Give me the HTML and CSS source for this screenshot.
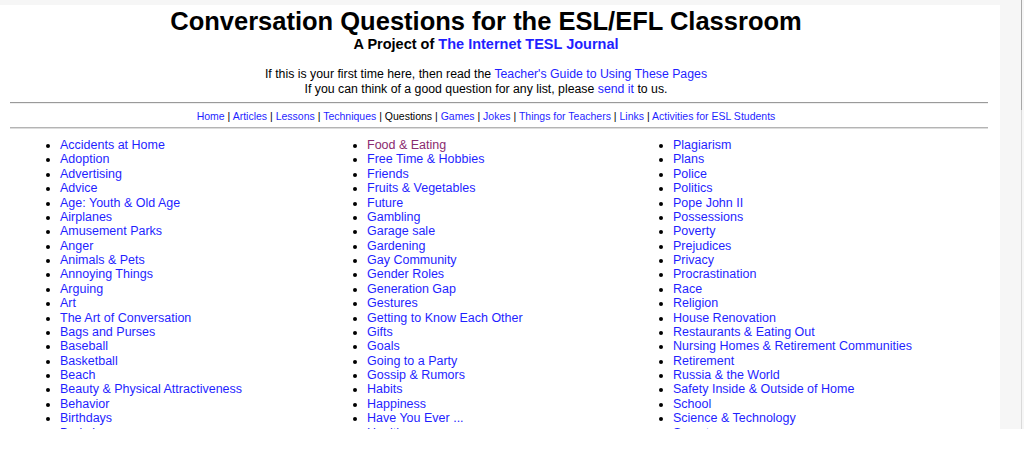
FILE: index.html
```html
<!DOCTYPE html>
<html>
<head>
<meta charset="utf-8">
<title>Conversation Questions for the ESL/EFL Classroom</title>
<link rel="stylesheet" href="styles.css">
</head>
<body>
<div class="frame">
  <div class="page">
    <div class="header">
      <h1 class="title">Conversation Questions for the ESL/EFL Classroom</h1>
      <div class="subtitle">A Project of <a href="#">The Internet TESL Journal</a></div>
      <p class="intro">If this is your first time here, then read the <a href="#">Teacher's Guide to Using These Pages</a><br>If you can think of a good question for any list, please <a href="#">send it</a> to us.</p>
    </div>
    <hr class="rule rule-top">
    <div class="nav">
      <a href="#">Home</a> | <a href="#">Articles</a> | <a href="#">Lessons</a> | <a href="#">Techniques</a> | Questions | <a href="#">Games</a> | <a href="#">Jokes</a> | <a href="#">Things for Teachers</a> | <a href="#">Links</a> | <a href="#">Activities for ESL Students</a>
    </div>
    <hr class="rule rule-bottom">
    <div class="columns">
      <ul class="topics">
        <li><a href="#">Accidents at Home</a></li>
        <li><a href="#">Adoption</a></li>
        <li><a href="#">Advertising</a></li>
        <li><a href="#">Advice</a></li>
        <li><a href="#">Age: Youth &amp; Old Age</a></li>
        <li><a href="#">Airplanes</a></li>
        <li><a href="#">Amusement Parks</a></li>
        <li><a href="#">Anger</a></li>
        <li><a href="#">Animals &amp; Pets</a></li>
        <li><a href="#">Annoying Things</a></li>
        <li><a href="#">Arguing</a></li>
        <li><a href="#">Art</a></li>
        <li><a href="#">The Art of Conversation</a></li>
        <li><a href="#">Bags and Purses</a></li>
        <li><a href="#">Baseball</a></li>
        <li><a href="#">Basketball</a></li>
        <li><a href="#">Beach</a></li>
        <li><a href="#">Beauty &amp; Physical Attractiveness</a></li>
        <li><a href="#">Behavior</a></li>
        <li><a href="#">Birthdays</a></li>
        <li><a href="#">Body Language</a></li>
      </ul>
      <ul class="topics">
        <li><a href="#" class="visited">Food &amp; Eating</a></li>
        <li><a href="#">Free Time &amp; Hobbies</a></li>
        <li><a href="#">Friends</a></li>
        <li><a href="#">Fruits &amp; Vegetables</a></li>
        <li><a href="#">Future</a></li>
        <li><a href="#">Gambling</a></li>
        <li><a href="#">Garage sale</a></li>
        <li><a href="#">Gardening</a></li>
        <li><a href="#">Gay Community</a></li>
        <li><a href="#">Gender Roles</a></li>
        <li><a href="#">Generation Gap</a></li>
        <li><a href="#">Gestures</a></li>
        <li><a href="#">Getting to Know Each Other</a></li>
        <li><a href="#">Gifts</a></li>
        <li><a href="#">Goals</a></li>
        <li><a href="#">Going to a Party</a></li>
        <li><a href="#">Gossip &amp; Rumors</a></li>
        <li><a href="#">Habits</a></li>
        <li><a href="#">Happiness</a></li>
        <li><a href="#">Have You Ever ...</a></li>
        <li><a href="#">Health</a></li>
      </ul>
      <ul class="topics">
        <li><a href="#">Plagiarism</a></li>
        <li><a href="#">Plans</a></li>
        <li><a href="#">Police</a></li>
        <li><a href="#">Politics</a></li>
        <li><a href="#">Pope John II</a></li>
        <li><a href="#">Possessions</a></li>
        <li><a href="#">Poverty</a></li>
        <li><a href="#">Prejudices</a></li>
        <li><a href="#">Privacy</a></li>
        <li><a href="#">Procrastination</a></li>
        <li><a href="#">Race</a></li>
        <li><a href="#">Religion</a></li>
        <li><a href="#">House Renovation</a></li>
        <li><a href="#">Restaurants &amp; Eating Out</a></li>
        <li><a href="#">Nursing Homes &amp; Retirement Communities</a></li>
        <li><a href="#">Retirement</a></li>
        <li><a href="#">Russia &amp; the World</a></li>
        <li><a href="#">Safety Inside &amp; Outside of Home</a></li>
        <li><a href="#">School</a></li>
        <li><a href="#">Science &amp; Technology</a></li>
        <li><a href="#">Secrets</a></li>
      </ul>
    </div>
  </div>
  <div class="rail">
    <div class="rail-line"><div class="rail-thumb"></div></div>
  </div>
</div>
</body>
</html>
```

FILE: styles.css
```css
html, body {
  margin: 0;
  padding: 0;
  background: #ffffff;
}

body {
  font-family: "Liberation Sans", Arial, sans-serif;
  color: #000;
}

a {
  color: #1f1fff;
  text-decoration: none;
}

a.visited {
  color: #8a2a70;
}

.frame {
  display: flex;
  height: 429px;
  background: #f6f6f6;
}

.page {
  width: 1000px;
  flex: none;
  margin-top: 5px;
  background: #ffffff;
  overflow: hidden;
  padding: 0 12px 0 10px;
  box-sizing: border-box;
}

.header {
  padding-right: 26px;
  text-align: center;
}

.title {
  margin: 1px 0 0;
  font-size: 25.5px;
  line-height: 30px;
  font-weight: bold;
}

.subtitle {
  font-size: 14.5px;
  line-height: 16px;
  font-weight: bold;
}

.intro {
  margin: 15px 0 0;
  font-size: 12.3px;
  line-height: 15px;
}

.rule {
  margin: 0;
  border: 0;
  height: 0;
}

.rule-top {
  margin-top: 5px;
  border-top: 1px solid #9a9a9a;
  border-bottom: 1px solid #eeeeee;
}

.rule-bottom {
  border-top: 1px solid #b4b4b4;
  border-bottom: 1px solid #dddddd;
}

.nav {
  padding-right: 26px;
  text-align: center;
  font-size: 10.5px;
  line-height: 13px;
  padding-top: 6px;
  padding-bottom: 4px;
}

.columns {
  display: grid;
  grid-template-columns: 307px 306px 306px;
  margin-left: 10px;
  margin-top: 9px;
}

.topics {
  margin: 0;
  padding-left: 40px;
  list-style: disc;
  font-size: 12.5px;
  line-height: 14.37px;
}

.rail {
  flex: 1;
  display: flex;
  padding-left: 21px;
}

.rail-line {
  width: 1px;
  background: #dadada;
  display: flex;
  flex-direction: column;
}

.rail-thumb {
  height: 110px;
  background: #a8a8a8;
}
```
